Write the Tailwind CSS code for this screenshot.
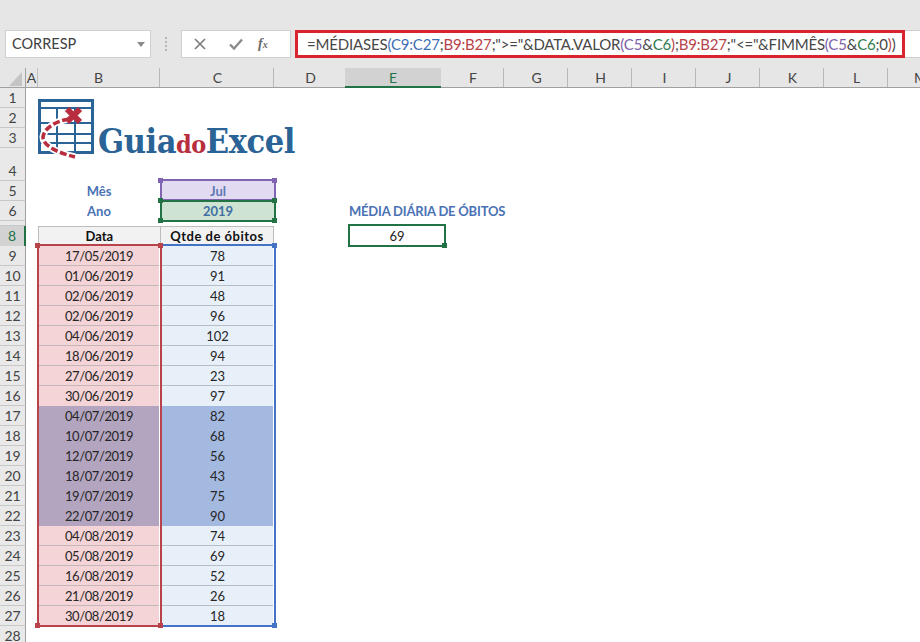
<!DOCTYPE html>
<html><head><meta charset="utf-8"><script src="https://cdn.jsdelivr.net/npm/@tailwindcss/browser@4"></script></head>
<body class="bg-white">
<div class="relative w-[920px] h-[642px] overflow-hidden bg-white [font-family:Lato,sans-serif] text-[13px] text-[#262626]">

<!-- toolbar -->
<div class="flex items-center h-[68px] bg-[#e6e6e6] pt-[20px]">
  <div class="ml-[5px] w-[146px] h-[28px] bg-white border border-[#d0d0d0] flex items-center justify-between pl-[6px] pr-[4px]">
    <span class="text-[14.5px] text-[#404040]">CORRESP</span>
    <svg width="8" height="5" viewBox="0 0 8 5" class="mr-[1px]"><path d="M0 0h8L4 5z" fill="#8a8a8a"/></svg>
  </div>
  <div class="w-[30px] flex flex-col items-center gap-[2px]">
    <span class="w-[2px] h-[2px] bg-[#b5b5b5]"></span><span class="w-[2px] h-[2px] bg-[#b5b5b5]"></span><span class="w-[2px] h-[2px] bg-[#b5b5b5]"></span><span class="w-[2px] h-[2px] bg-[#b5b5b5]"></span>
  </div>
  <div class="w-[110px] h-[28px] bg-white border border-[#d0d0d0] flex items-center">
    <svg width="12" height="12" viewBox="0 0 12 12" class="ml-[12px]"><path d="M1 1l10 10M11 1L1 11" stroke="#7a7a7a" stroke-width="1.6" fill="none"/></svg>
    <svg width="14" height="12" viewBox="0 0 14 12" class="ml-[23px]"><path d="M1 6.5l4 4L13 1.5" stroke="#8a8a8a" stroke-width="2.4" fill="none"/></svg>
    <span class="ml-[15px] [font-family:'Liberation_Serif',serif] italic text-[14px] text-[#6a6a6a] font-bold leading-none">f<span class="text-[10px]">x</span></span>
  </div>
  <div class="ml-[4px] flex-1 h-[28px] bg-white border-r-0 flex">
    <div class="w-[610px] h-[28px] border-[3px] border-[#d9232e] pl-[9px] flex items-center whitespace-nowrap text-[#474747] text-[15px] tracking-[-0.18px]">=MÉDIASES<span class="text-[#3f6fb5]">(C9:C27</span>;<span class="text-[#b8434b]">B9:B27</span>;"&gt;="&amp;DATA.VALOR<span class="text-[#7d62a8]">(C5</span>&amp;<span class="text-[#2f7d4f]">C6</span><span class="text-[#b8434b]">)</span>;<span class="text-[#b8434b]">B9:B27</span>;"&lt;="&amp;FIMMÊS<span class="text-[#7d62a8]">(C5</span>&amp;<span class="text-[#2f7d4f]">C6</span>;0<span class="text-[#b8434b]">)</span>)</div>
    <div class="flex-1 border-y border-[#d0d0d0]"></div>
  </div>
</div>

<!-- column headers -->
<div class="flex h-[20px] bg-[#e6e6e6] border-b border-[#a0a0a0] text-[14px] text-[#444] leading-[19px] text-center">
  <div class="w-[26px] border-r border-[#a0a0a0] relative"><svg width="13" height="14" viewBox="0 0 13 14" class="absolute left-[9px] top-[4px]"><path d="M13 0v14H0z" fill="#c4c4c4"/></svg></div>
  <div class="w-[12px] border-r border-[#c0c0c0]">A</div>
  <div class="w-[122px] border-r border-[#b8b8b8]">B</div>
  <div class="w-[114px] pl-[2px] border-r border-[#b8b8b8]">C</div>
  <div class="w-[71px] pl-[2px]">D</div>
  <div class="w-[96px] h-[20px] bg-[#d2d2d2] border-b-2 border-[#217346] text-[#217346]">E</div>
  <div class="w-[63px] pl-[2px] border-r border-[#b8b8b8]">F</div>
  <div class="w-[64px] pl-[2px] border-r border-[#b8b8b8]">G</div>
  <div class="w-[64px] pl-[2px] border-r border-[#b8b8b8]">H</div>
  <div class="w-[64px] pl-[2px] border-r border-[#b8b8b8]">I</div>
  <div class="w-[64px] pl-[2px] border-r border-[#b8b8b8]">J</div>
  <div class="w-[64px] pl-[2px] border-r border-[#b8b8b8]">K</div>
  <div class="w-[64px] pl-[2px] border-r border-[#b8b8b8]">L</div>
  <div class="w-[32px] pl-[26px] text-left">M</div>
</div>

<!-- rows 1–4 -->
<div class="flex h-[20px]"><div class="w-[26px] bg-[#e9e9e9] border-r border-b border-r-[#a0a0a0] border-b-[#c8c8c8] text-[14px] text-[#444] text-center leading-[20px]">1</div></div>
<div class="flex h-[20px]"><div class="w-[26px] bg-[#e9e9e9] border-r border-b border-r-[#a0a0a0] border-b-[#c8c8c8] text-[14px] text-[#444] text-center leading-[20px]">2</div></div>
<div class="flex h-[20px]"><div class="w-[26px] bg-[#e9e9e9] border-r border-b border-r-[#a0a0a0] border-b-[#c8c8c8] text-[14px] text-[#444] text-center leading-[20px]">3</div></div>
<div class="flex h-[33px]"><div class="w-[26px] bg-[#e9e9e9] border-r border-b border-r-[#a0a0a0] border-b-[#c8c8c8] text-[14px] text-[#444] text-center pt-[13px] leading-[20px]">4</div></div>

<!-- rows 5, 6 -->
<div class="flex h-[20px] font-bold text-[#4a72b5] leading-[20px] text-center">
  <div class="w-[26px] bg-[#e9e9e9] border-r border-b border-r-[#a0a0a0] border-b-[#c8c8c8] text-[14px] font-normal text-[#444]">5</div>
  <div class="ml-[12px] w-[122px]">Mês</div>
  <div class="ml-[2px] w-[112px] bg-[#e2daf1] text-[#5b78b3]">Jul</div>
</div>
<div class="flex h-[20px] font-bold text-[#4a72b5] leading-[20px] text-center">
  <div class="w-[26px] bg-[#e9e9e9] border-r border-b border-r-[#a0a0a0] border-b-[#c8c8c8] text-[14px] font-normal text-[#444]">6</div>
  <div class="ml-[12px] w-[122px]">Ano</div>
  <div class="ml-[2px] w-[112px] bg-[#cfe3d2] text-[#3f6fa5]">2019</div>
  <div class="ml-[75px] whitespace-nowrap tracking-[-0.2px]">MÉDIA DIÁRIA DE ÓBITOS</div>
</div>
<div class="flex h-[5px]"><div class="w-[26px] bg-[#e9e9e9] border-r border-b border-r-[#a0a0a0] border-b-[#c8c8c8]"></div></div>

<!-- row 8 -->
<div class="flex h-[20px] leading-[20px] text-center text-[#111]">
  <div class="w-[26px] bg-[#d2d2d2] border-r-2 border-[#217346] text-[14px] text-[#217346]">8</div>
  <div class="ml-[11.5px] w-[122.5px] h-[20px] leading-[18px] bg-[#f2f2f2] border-l border-t border-[#bdbdbd] font-bold">Data</div>
  <div class="w-[114px] h-[20px] leading-[18px] tracking-[0.5px] bg-[#f2f2f2] border-x border-t border-[#bdbdbd] font-bold">Qtde de óbitos</div>
  <div class="ml-[74px] w-[98px] -mt-[2px] h-[23px] border-2 border-[#217346] leading-[21px] text-[#222]">69</div>
</div>

<!-- data rows -->
<div class="flex h-[20px] leading-[20px] text-center"><div class="w-[26px] bg-[#e9e9e9] border-r border-b border-r-[#a0a0a0] border-b-[#c8c8c8] text-[14px] text-[#444]">9</div><div class="ml-[13px] w-[120px] tracking-[-0.4px] bg-[#f4d4d6] border-b border-[#c2b8bb]">17/05/2019</div><div class="ml-[3px] w-[111px] bg-[#e7eff9] border-b border-[#b8bcc4]">78</div></div>
<div class="flex h-[20px] leading-[20px] text-center"><div class="w-[26px] bg-[#e9e9e9] border-r border-b border-r-[#a0a0a0] border-b-[#c8c8c8] text-[14px] text-[#444]">10</div><div class="ml-[13px] w-[120px] tracking-[-0.4px] bg-[#f4d4d6] border-b border-[#c2b8bb]">01/06/2019</div><div class="ml-[3px] w-[111px] bg-[#e7eff9] border-b border-[#b8bcc4]">91</div></div>
<div class="flex h-[20px] leading-[20px] text-center"><div class="w-[26px] bg-[#e9e9e9] border-r border-b border-r-[#a0a0a0] border-b-[#c8c8c8] text-[14px] text-[#444]">11</div><div class="ml-[13px] w-[120px] tracking-[-0.4px] bg-[#f4d4d6] border-b border-[#c2b8bb]">02/06/2019</div><div class="ml-[3px] w-[111px] bg-[#e7eff9] border-b border-[#b8bcc4]">48</div></div>
<div class="flex h-[20px] leading-[20px] text-center"><div class="w-[26px] bg-[#e9e9e9] border-r border-b border-r-[#a0a0a0] border-b-[#c8c8c8] text-[14px] text-[#444]">12</div><div class="ml-[13px] w-[120px] tracking-[-0.4px] bg-[#f4d4d6] border-b border-[#c2b8bb]">02/06/2019</div><div class="ml-[3px] w-[111px] bg-[#e7eff9] border-b border-[#b8bcc4]">96</div></div>
<div class="flex h-[20px] leading-[20px] text-center"><div class="w-[26px] bg-[#e9e9e9] border-r border-b border-r-[#a0a0a0] border-b-[#c8c8c8] text-[14px] text-[#444]">13</div><div class="ml-[13px] w-[120px] tracking-[-0.4px] bg-[#f4d4d6] border-b border-[#c2b8bb]">04/06/2019</div><div class="ml-[3px] w-[111px] bg-[#e7eff9] border-b border-[#b8bcc4]">102</div></div>
<div class="flex h-[20px] leading-[20px] text-center"><div class="w-[26px] bg-[#e9e9e9] border-r border-b border-r-[#a0a0a0] border-b-[#c8c8c8] text-[14px] text-[#444]">14</div><div class="ml-[13px] w-[120px] tracking-[-0.4px] bg-[#f4d4d6] border-b border-[#c2b8bb]">18/06/2019</div><div class="ml-[3px] w-[111px] bg-[#e7eff9] border-b border-[#b8bcc4]">94</div></div>
<div class="flex h-[20px] leading-[20px] text-center"><div class="w-[26px] bg-[#e9e9e9] border-r border-b border-r-[#a0a0a0] border-b-[#c8c8c8] text-[14px] text-[#444]">15</div><div class="ml-[13px] w-[120px] tracking-[-0.4px] bg-[#f4d4d6] border-b border-[#c2b8bb]">27/06/2019</div><div class="ml-[3px] w-[111px] bg-[#e7eff9] border-b border-[#b8bcc4]">23</div></div>
<div class="flex h-[20px] leading-[20px] text-center"><div class="w-[26px] bg-[#e9e9e9] border-r border-b border-r-[#a0a0a0] border-b-[#c8c8c8] text-[14px] text-[#444]">16</div><div class="ml-[13px] w-[120px] tracking-[-0.4px] bg-[#f4d4d6]">30/06/2019</div><div class="ml-[3px] w-[111px] bg-[#e7eff9]">97</div></div>
<div class="flex h-[20px] leading-[20px] text-center"><div class="w-[26px] bg-[#e9e9e9] border-r border-b border-r-[#a0a0a0] border-b-[#c8c8c8] text-[14px] text-[#444]">17</div><div class="ml-[13px] w-[120px] tracking-[-0.4px] bg-[#b3a5bf]">04/07/2019</div><div class="ml-[3px] w-[111px] bg-[#a4b9df]">82</div></div>
<div class="flex h-[20px] leading-[20px] text-center"><div class="w-[26px] bg-[#e9e9e9] border-r border-b border-r-[#a0a0a0] border-b-[#c8c8c8] text-[14px] text-[#444]">18</div><div class="ml-[13px] w-[120px] tracking-[-0.4px] bg-[#b3a5bf]">10/07/2019</div><div class="ml-[3px] w-[111px] bg-[#a4b9df]">68</div></div>
<div class="flex h-[20px] leading-[20px] text-center"><div class="w-[26px] bg-[#e9e9e9] border-r border-b border-r-[#a0a0a0] border-b-[#c8c8c8] text-[14px] text-[#444]">19</div><div class="ml-[13px] w-[120px] tracking-[-0.4px] bg-[#b3a5bf]">12/07/2019</div><div class="ml-[3px] w-[111px] bg-[#a4b9df]">56</div></div>
<div class="flex h-[20px] leading-[20px] text-center"><div class="w-[26px] bg-[#e9e9e9] border-r border-b border-r-[#a0a0a0] border-b-[#c8c8c8] text-[14px] text-[#444]">20</div><div class="ml-[13px] w-[120px] tracking-[-0.4px] bg-[#b3a5bf]">18/07/2019</div><div class="ml-[3px] w-[111px] bg-[#a4b9df]">43</div></div>
<div class="flex h-[20px] leading-[20px] text-center"><div class="w-[26px] bg-[#e9e9e9] border-r border-b border-r-[#a0a0a0] border-b-[#c8c8c8] text-[14px] text-[#444]">21</div><div class="ml-[13px] w-[120px] tracking-[-0.4px] bg-[#b3a5bf]">19/07/2019</div><div class="ml-[3px] w-[111px] bg-[#a4b9df]">75</div></div>
<div class="flex h-[20px] leading-[20px] text-center"><div class="w-[26px] bg-[#e9e9e9] border-r border-b border-r-[#a0a0a0] border-b-[#c8c8c8] text-[14px] text-[#444]">22</div><div class="ml-[13px] w-[120px] tracking-[-0.4px] bg-[#b3a5bf]">22/07/2019</div><div class="ml-[3px] w-[111px] bg-[#a4b9df]">90</div></div>
<div class="flex h-[20px] leading-[20px] text-center"><div class="w-[26px] bg-[#e9e9e9] border-r border-b border-r-[#a0a0a0] border-b-[#c8c8c8] text-[14px] text-[#444]">23</div><div class="ml-[13px] w-[120px] tracking-[-0.4px] bg-[#f4d4d6] border-b border-[#c2b8bb]">04/08/2019</div><div class="ml-[3px] w-[111px] bg-[#e7eff9] border-b border-[#b8bcc4]">74</div></div>
<div class="flex h-[20px] leading-[20px] text-center"><div class="w-[26px] bg-[#e9e9e9] border-r border-b border-r-[#a0a0a0] border-b-[#c8c8c8] text-[14px] text-[#444]">24</div><div class="ml-[13px] w-[120px] tracking-[-0.4px] bg-[#f4d4d6] border-b border-[#c2b8bb]">05/08/2019</div><div class="ml-[3px] w-[111px] bg-[#e7eff9] border-b border-[#b8bcc4]">69</div></div>
<div class="flex h-[20px] leading-[20px] text-center"><div class="w-[26px] bg-[#e9e9e9] border-r border-b border-r-[#a0a0a0] border-b-[#c8c8c8] text-[14px] text-[#444]">25</div><div class="ml-[13px] w-[120px] tracking-[-0.4px] bg-[#f4d4d6] border-b border-[#c2b8bb]">16/08/2019</div><div class="ml-[3px] w-[111px] bg-[#e7eff9] border-b border-[#b8bcc4]">52</div></div>
<div class="flex h-[20px] leading-[20px] text-center"><div class="w-[26px] bg-[#e9e9e9] border-r border-b border-r-[#a0a0a0] border-b-[#c8c8c8] text-[14px] text-[#444]">26</div><div class="ml-[13px] w-[120px] tracking-[-0.4px] bg-[#f4d4d6] border-b border-[#c2b8bb]">21/08/2019</div><div class="ml-[3px] w-[111px] bg-[#e7eff9] border-b border-[#b8bcc4]">26</div></div>
<div class="flex h-[20px] leading-[20px] text-center"><div class="w-[26px] bg-[#e9e9e9] border-r border-b border-r-[#a0a0a0] border-b-[#c8c8c8] text-[14px] text-[#444]">27</div><div class="ml-[13px] w-[120px] tracking-[-0.4px] bg-[#f4d4d6]">30/08/2019</div><div class="ml-[3px] w-[111px] bg-[#e7eff9]">18</div></div>
<div class="flex h-[20px] leading-[20px] text-center"><div class="w-[26px] bg-[#e9e9e9] border-r border-r-[#a0a0a0] text-[14px] text-[#444]">28</div></div>

<!-- range-highlight overlays -->
<div class="absolute left-[160px] top-[179px] w-[116px] h-[22px] border-2 border-[#8064b2]"></div>
<div class="absolute left-[158px] top-[178px] w-[5px] h-[5px] bg-[#8064b2]"></div>
<div class="absolute left-[272px] top-[178px] w-[5px] h-[5px] bg-[#8064b2]"></div>
<div class="absolute left-[160px] top-[200px] w-[116px] h-[22px] border-2 border-[#217346]"></div>
<div class="absolute left-[158px] top-[198px] w-[5px] h-[5px] bg-[#217346]"></div>
<div class="absolute left-[272px] top-[198px] w-[5px] h-[5px] bg-[#217346]"></div>
<div class="absolute left-[158px] top-[218px] w-[5px] h-[5px] bg-[#217346]"></div>
<div class="absolute left-[272px] top-[218px] w-[5px] h-[5px] bg-[#217346]"></div>
<div class="absolute left-[162px] top-[244px] w-[114px] h-[383px] border-2 border-l-0 border-[#4472c4]"></div>
<div class="absolute left-[272px] top-[243px] w-[5px] h-[5px] bg-[#4472c4]"></div>
<div class="absolute left-[272px] top-[623px] w-[5px] h-[5px] bg-[#4472c4]"></div>
<div class="absolute left-[37px] top-[244px] w-[125px] h-[383px] border-2 border-[#b8434b]"></div>
<div class="absolute left-[35px] top-[243px] w-[5px] h-[5px] bg-[#b8434b]"></div>
<div class="absolute left-[158px] top-[243px] w-[5px] h-[5px] bg-[#b8434b]"></div>
<div class="absolute left-[35px] top-[623px] w-[5px] h-[5px] bg-[#b8434b]"></div>
<div class="absolute left-[158px] top-[623px] w-[5px] h-[5px] bg-[#b8434b]"></div>
<div class="absolute left-[442px] top-[243px] w-[5px] h-[5px] bg-[#217346]"></div>

<!-- floating logo -->
<svg class="absolute left-[36px] top-[97px]" width="62" height="66" viewBox="0 0 62 66" fill="none">
  <path d="M3.5 3.5h53v52h-53z" stroke="#2a6496" stroke-width="3"/>
  <path d="M3 11h54M3 26h54M3 37h54M3 46h54" stroke="#2a6496" stroke-width="2"/>
  <path d="M21 11v45M39 11v45" stroke="#2a6496" stroke-width="2"/>
  <path d="M33 22C20 24 8 31 7 40c0 8 12 15 32 20" stroke="#fff" stroke-width="7"/>
  <path d="M33 22C20 24 8 31 7 40c0 8 12 15 32 20" stroke="#b82e3e" stroke-width="3.6" stroke-dasharray="7 2.6"/>
  <path d="M31 12l13 13M44 12L31 25" stroke="#b82e3e" stroke-width="6"/>
</svg>
<div class="absolute left-[98px] top-[119px] h-[44px] whitespace-nowrap [font-family:'DejaVu_Serif',serif] font-bold text-[34px] leading-[44px] text-[#2a6496] origin-left scale-x-[0.9] tracking-[-0.5px]">Guia<span class="text-[#b82e3e] text-[25px]">do</span>Excel</div>

</div>
</body></html>
